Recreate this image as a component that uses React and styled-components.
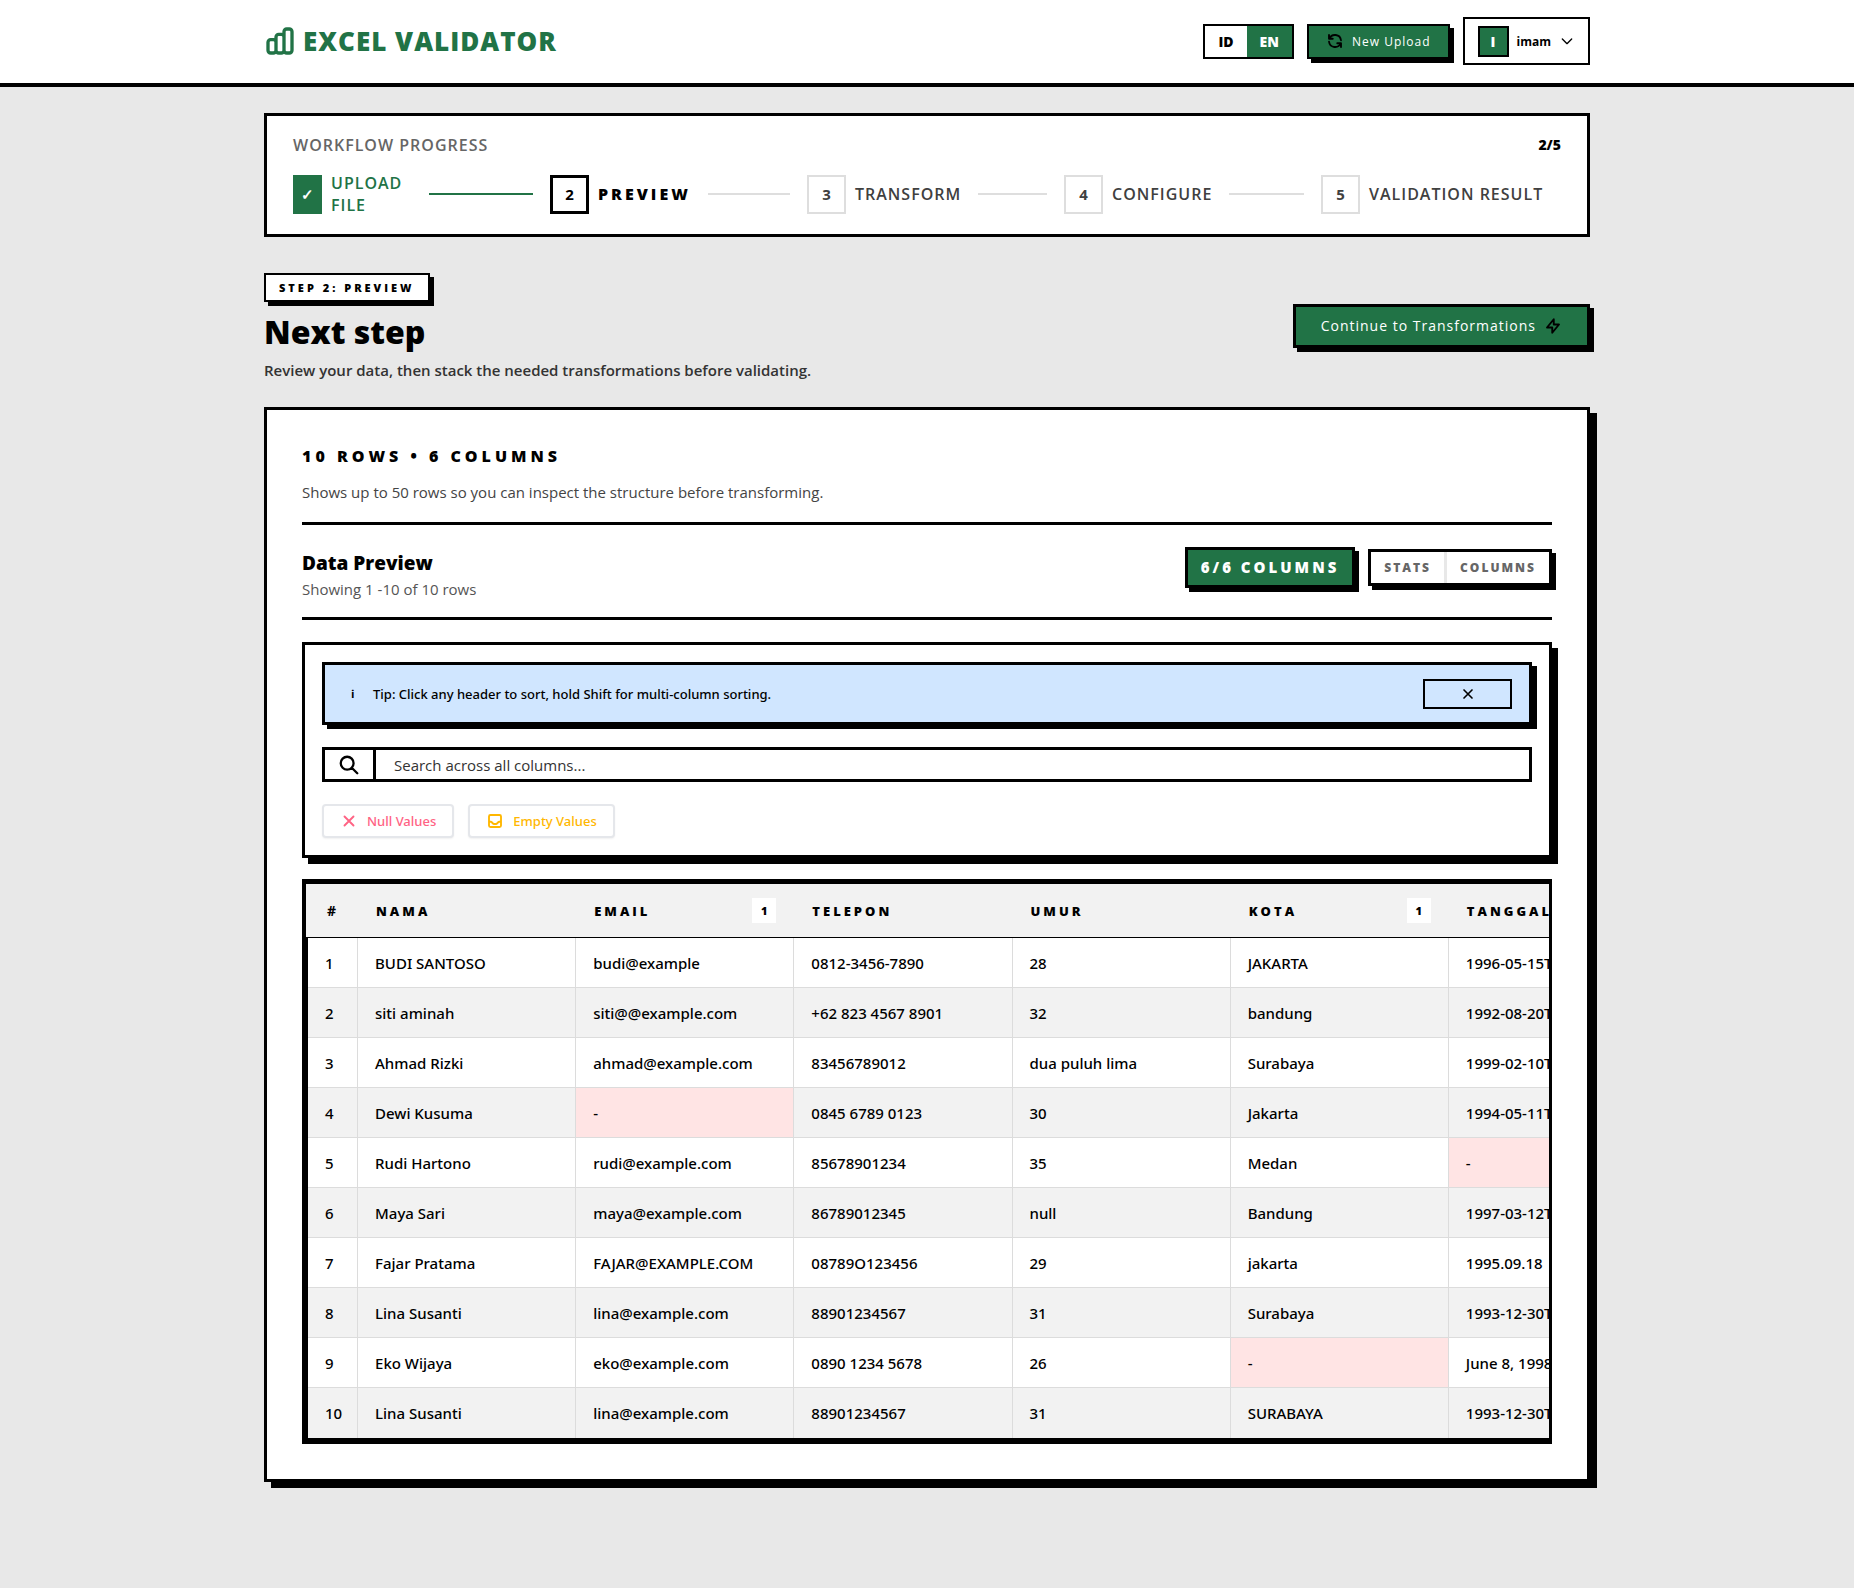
import React, { useState } from 'react';
import styled, { createGlobalStyle } from 'styled-components';
import {
  HiOutlineChartBar,
  HiOutlineRefresh,
  HiOutlineChevronDown,
  HiOutlineLightningBolt,
  HiOutlineSearch,
  HiOutlineX,
  HiOutlineInbox,
} from 'react-icons/hi';

const steps = ['Upload File', 'Preview', 'Transform', 'Configure', 'Validation Result'];
const currentStep = 2;

const columns = [
  { name: 'Nama' },
  { name: 'Email', nulls: 1 },
  { name: 'Telepon' },
  { name: 'Umur' },
  { name: 'Kota', nulls: 1 },
  { name: 'Tanggal' },
];

const rows = [
  ['BUDI SANTOSO', 'budi@example', '0812-3456-7890', '28', 'JAKARTA', '1996-05-15T'],
  ['siti aminah', 'siti@@example.com', '+62 823 4567 8901', '32', 'bandung', '1992-08-20T'],
  ['Ahmad Rizki', 'ahmad@example.com', '83456789012', 'dua puluh lima', 'Surabaya', '1999-02-10T'],
  ['Dewi Kusuma', null, '0845 6789 0123', '30', 'Jakarta', '1994-05-11T'],
  ['Rudi Hartono', 'rudi@example.com', '85678901234', '35', 'Medan', null],
  ['Maya Sari', 'maya@example.com', '86789012345', 'null', 'Bandung', '1997-03-12T'],
  ['Fajar Pratama', 'FAJAR@EXAMPLE.COM', '08789O123456', '29', 'jakarta', '1995.09.18'],
  ['Lina Susanti', 'lina@example.com', '88901234567', '31', 'Surabaya', '1993-12-30T'],
  ['Eko Wijaya', 'eko@example.com', '0890 1234 5678', '26', null, 'June 8, 1998'],
  ['Lina Susanti', 'lina@example.com', '88901234567', '31', 'SURABAYA', '1993-12-30T'],
];

const App = () => {
  const [query, setQuery] = useState('');

  return (
    <>
      <GlobalStyle />
      <TopBar>
        <TopBarInner>
          <Brand href="#">
            <HiOutlineChartBar size={32} />
            Excel Validator
          </Brand>
          <TopActions>
            <LangSwitch>
              <LangButton type="button">ID</LangButton>
              <LangButton type="button" $active>EN</LangButton>
            </LangSwitch>
            <UploadButton type="button">
              <HiOutlineRefresh size={18} />
              <span>New Upload</span>
            </UploadButton>
            <UserButton type="button">
              <Avatar>I</Avatar>
              imam
              <HiOutlineChevronDown size={16} />
            </UserButton>
          </TopActions>
        </TopBarInner>
      </TopBar>

      <Page>
        <Progress>
          <ProgressHead>
            <ProgressTitle>Workflow Progress</ProgressTitle>
            <ProgressCount>{currentStep}/{steps.length}</ProgressCount>
          </ProgressHead>
          <StepList>
            {steps.map((label, i) => {
              const n = i + 1;
              const state = n < currentStep ? 'done' : n === currentStep ? 'current' : 'todo';
              return (
                <Step key={label}>
                  <StepBox $state={state}>{state === 'done' ? '✓' : n}</StepBox>
                  <StepLabel $state={state}>{label}</StepLabel>
                  {n < steps.length && <StepLine $state={state} />}
                </Step>
              );
            })}
          </StepList>
        </Progress>

        <PageHead>
          <div>
            <StepBadge>Step 2: Preview</StepBadge>
            <PageTitle>Next step</PageTitle>
            <PageText>Review your data, then stack the needed transformations before validating.</PageText>
          </div>
          <ContinueButton type="button">
            <span>Continue to Transformations</span>
            <HiOutlineLightningBolt size={18} />
          </ContinueButton>
        </PageHead>

        <Card>
          <CardHead>
            <Summary>10 rows • 6 columns</Summary>
            <CardText>Shows up to 50 rows so you can inspect the structure before transforming.</CardText>
          </CardHead>

          <PreviewHead>
            <PreviewTitles>
              <PreviewTitle>Data Preview</PreviewTitle>
              <PreviewText>Showing 1 -10 of 10 rows</PreviewText>
            </PreviewTitles>
            <PreviewActions>
              <ColumnCount>6/6 columns</ColumnCount>
              <Segments>
                <SegmentButton type="button">Stats</SegmentButton>
                <SegmentButton type="button">Columns</SegmentButton>
              </Segments>
            </PreviewActions>
          </PreviewHead>

          <Filters>
            <Tip>
              <TipIcon>ℹ</TipIcon>
              <TipText>Tip: Click any header to sort, hold Shift for multi-column sorting.</TipText>
              <DismissButton type="button" aria-label="Dismiss tip">
                <HiOutlineX size={16} />
              </DismissButton>
            </Tip>
            <SearchBox>
              <SearchLabel htmlFor="search" aria-label="Search">
                <HiOutlineSearch size={22} />
              </SearchLabel>
              <SearchInput
                id="search"
                type="text"
                placeholder="Search across all columns..."
                value={query}
                onChange={(e) => setQuery(e.target.value)}
              />
            </SearchBox>
            <FilterRow>
              <FilterButton type="button" $color="#ff6384">
                <HiOutlineX size={18} />
                Null Values
              </FilterButton>
              <FilterButton type="button" $color="#ffb700">
                <HiOutlineInbox size={18} />
                Empty Values
              </FilterButton>
            </FilterRow>
          </Filters>

          <TableWrap>
            <Table>
              <colgroup>
                <IndexCol />
                {columns.map((c) => <DataCol key={c.name} />)}
              </colgroup>
              <thead>
                <tr>
                  <HeadCell scope="col"><HeadInner>#</HeadInner></HeadCell>
                  {columns.map((c) => (
                    <HeadCell key={c.name} scope="col">
                      <HeadInner>
                        <SortButton type="button">{c.name}</SortButton>
                        {c.nulls && <NullCount>{c.nulls}</NullCount>}
                      </HeadInner>
                    </HeadCell>
                  ))}
                </tr>
              </thead>
              <tbody>
                {rows.map((row, i) => (
                  <Row key={i}>
                    <Cell>{i + 1}</Cell>
                    {row.map((value, j) => (
                      <Cell key={j} $empty={value === null}>{value ?? '-'}</Cell>
                    ))}
                  </Row>
                ))}
              </tbody>
            </Table>
          </TableWrap>
        </Card>
      </Page>
    </>
  );
};

const green = '#217346';
const mediumFont = "'Noto Sans', 'Open Sans', sans-serif";

const GlobalStyle = createGlobalStyle`
  *, *::before, *::after {
    box-sizing: border-box;
  }

  body {
    margin: 0;
    background: #e8e8e8;
    color: #000;
    font-family: 'Open Sans', 'Noto Sans', sans-serif;
    font-size: 15px;
    line-height: 24px;
  }

  button, input {
    font-family: inherit;
    color: inherit;
  }

  button {
    cursor: pointer;
  }

  h1, h2, h3, p {
    margin: 0;
  }

  svg {
    flex: none;
  }

  svg path {
    stroke-width: 2.5;
  }
`;

const TopBar = styled.header`
  padding: 17px 32px 18px;
  background: #fff;
  border-bottom: 4px solid #000;
`;

const TopBarInner = styled.div`
  display: flex;
  align-items: center;
  justify-content: space-between;
  max-width: 1326px;
  margin: 0 auto;
`;

const Brand = styled.a`
  display: flex;
  align-items: center;
  gap: 7px;
  color: ${green};
  font-size: 26px;
  font-weight: 800;
  letter-spacing: 1px;
  text-transform: uppercase;
  text-decoration: none;
`;

const TopActions = styled.div`
  display: flex;
  align-items: center;
  gap: 13px;
`;

const LangSwitch = styled.div`
  display: flex;
  height: 35px;
  border: 2px solid #000;
`;

const LangButton = styled.button`
  padding: 0 13px;
  border: 0;
  background: ${(p) => (p.$active ? green : '#fff')};
  color: ${(p) => (p.$active ? '#fff' : '#000')};
  font-size: 14px;
  font-weight: 800;
`;

const UploadButton = styled.button`
  display: flex;
  align-items: center;
  gap: 8px;
  height: 35px;
  padding: 0 17px;
  border: 2px solid #000;
  background: ${green};
  box-shadow: 4px 4px 0 #000;
  font-size: 12px;
  letter-spacing: 1px;

  span {
    color: #fff;
  }
`;

const UserButton = styled.button`
  display: flex;
  align-items: center;
  gap: 8px;
  height: 48px;
  padding: 0 13px;
  border: 2px solid #000;
  background: #fff;
  font-size: 12px;
  font-weight: 700;

  svg path {
    stroke-width: 2;
  }
`;

const Avatar = styled.span`
  display: flex;
  align-items: center;
  justify-content: center;
  width: 31px;
  height: 31px;
  border: 2px solid #000;
  background: ${green};
  color: #fff;
  font-size: 14px;
  font-weight: 800;
`;

const Page = styled.main`
  max-width: 1326px;
  margin: 0 auto;
  padding: 26px 0 96px;
`;

const Progress = styled.section`
  padding: 17px 26px 18px;
  border: 3px solid #000;
  background: #fff;
`;

const ProgressHead = styled.div`
  display: flex;
  justify-content: space-between;
  margin-bottom: 15px;
`;

const ProgressTitle = styled.h2`
  color: #666;
  font-size: 16px;
  font-weight: 600;
  letter-spacing: 1px;
  line-height: 24px;
  text-transform: uppercase;
`;

const ProgressCount = styled.span`
  font-size: 14px;
  font-weight: 800;
`;

const StepList = styled.ol`
  display: grid;
  grid-template-columns: repeat(5, 1fr);
  gap: 17px;
  margin: 0;
  padding: 0;
  list-style: none;
`;

const Step = styled.li`
  display: flex;
  align-items: center;
  min-width: 0;
`;

const StepBox = styled.span`
  display: flex;
  flex: none;
  align-items: center;
  justify-content: center;
  width: ${(p) => (p.$state === 'done' ? '29px' : '39px')};
  height: 39px;
  border: ${(p) => ({ done: `2px solid ${green}`, current: '3px solid #000', todo: '2px solid #dedede' })[p.$state]};
  background: ${(p) => (p.$state === 'done' ? green : '#fff')};
  color: ${(p) => ({ done: '#fff', current: '#000', todo: '#404040' })[p.$state]};
  font-size: 15px;
  font-weight: 700;
`;

const StepLabel = styled.span`
  width: ${(p) => (p.$state === 'done' ? '81px' : 'auto')};
  margin-left: 9px;
  color: ${(p) => ({ done: green, current: '#000', todo: '#404040' })[p.$state]};
  font-size: 16px;
  font-weight: ${(p) => (p.$state === 'current' ? 900 : 600)};
  letter-spacing: ${(p) => (p.$state === 'current' ? '3px' : '1px')};
  line-height: 22px;
  text-transform: uppercase;
`;

const StepLine = styled.span`
  flex: 1;
  height: 2px;
  margin-left: 17px;
  background: ${(p) => (p.$state === 'done' ? green : '#dedede')};
`;

const PageHead = styled.div`
  display: flex;
  align-items: center;
  justify-content: space-between;
  margin: 36px 0 25px;
`;

const StepBadge = styled.span`
  display: inline-block;
  padding: 0 13px;
  border: 2px solid #000;
  background: #fff;
  box-shadow: 4px 4px 0 #000;
  font-size: 11px;
  font-weight: 900;
  letter-spacing: 3px;
  line-height: 25px;
  text-transform: uppercase;
  vertical-align: top;
`;

const PageTitle = styled.h1`
  margin: 8px 0 4px;
  font-size: 32px;
  font-weight: 900;
  line-height: 44px;
`;

const PageText = styled.p`
  color: #333;
  font-weight: 600;
`;

const ContinueButton = styled.button`
  display: flex;
  align-items: center;
  gap: 8px;
  height: 44px;
  margin-bottom: 4px;
  padding: 0 25px;
  border: 3px solid #000;
  background: ${green};
  box-shadow: 4px 4px 0 #000;
  font-size: 14px;
  letter-spacing: 1px;

  span {
    color: #fff;
  }
`;

const Card = styled.section`
  padding: 34px 35px 35px;
  border: 3px solid #000;
  background: #fff;
  box-shadow: 7px 6px 0 #000;
`;

const CardHead = styled.div`
  padding-bottom: 18px;
  border-bottom: 3px solid #000;
`;

const Summary = styled.h2`
  margin-bottom: 12px;
  font-size: 16px;
  font-weight: 900;
  letter-spacing: 4px;
  line-height: 24px;
  text-transform: uppercase;
`;

const CardText = styled.p`
  color: #444;
`;

const PreviewHead = styled.div`
  display: flex;
  align-items: flex-start;
  justify-content: space-between;
  padding: 22px 0 16px;
  border-bottom: 3px solid #000;
`;

const PreviewTitles = styled.div`
  padding-top: 2px;
`;

const PreviewTitle = styled.h3`
  font-size: 19px;
  font-weight: 800;
  line-height: 28px;
`;

const PreviewText = styled.p`
  color: #555;
`;

const PreviewActions = styled.div`
  display: flex;
  align-items: center;
  gap: 13px;
`;

const ColumnCount = styled.span`
  padding: 0 13px;
  border: 3px solid #000;
  background: ${green};
  box-shadow: 4px 4px 0 #000;
  color: #fff;
  font-weight: 900;
  letter-spacing: 3px;
  line-height: 35px;
  text-transform: uppercase;
`;

const Segments = styled.div`
  display: flex;
  height: 37px;
  border: 3px solid #000;
  background: #fff;
  box-shadow: 4px 4px 0 #000;
`;

const SegmentButton = styled.button`
  padding: 0 13px;
  border: 0;
  background: #fff;
  color: #666;
  font-size: 12px;
  font-weight: 900;
  letter-spacing: 2px;
  text-transform: uppercase;

  & + & {
    border-left: 3px solid #e8e8e8;
  }
`;

const Filters = styled.div`
  display: flex;
  flex-direction: column;
  gap: 22px;
  margin: 22px 0 21px;
  padding: 17px;
  border: 3px solid #000;
  background: #fff;
  box-shadow: 6px 6px 0 #000;
`;

const Tip = styled.div`
  display: flex;
  align-items: center;
  height: 63px;
  padding: 0 17px 0 26px;
  border: 3px solid #000;
  background: #d0e6ff;
  box-shadow: 5px 4px 0 #000;
`;

const TipIcon = styled.span`
  width: 22px;
  font-size: 11px;
  font-weight: 700;
`;

const TipText = styled.p`
  flex: 1;
  font-family: ${mediumFont};
  font-size: 13px;
  font-weight: 500;
`;

const DismissButton = styled.button`
  display: flex;
  align-items: center;
  justify-content: center;
  width: 89px;
  height: 30px;
  padding: 0;
  border: 2px solid #000;
  background: transparent;
`;

const SearchBox = styled.div`
  display: flex;
  height: 35px;
  border: 3px solid #000;
`;

const SearchLabel = styled.label`
  display: flex;
  align-items: center;
  justify-content: center;
  width: 51px;
  border-right: 3px solid #000;
`;

const SearchInput = styled.input`
  flex: 1;
  min-width: 0;
  padding: 0 18px;
  border: 0;
  outline: 0;
  background: #fff;
  font-size: 15px;

  &::placeholder {
    color: #333;
    opacity: 1;
  }
`;

const FilterRow = styled.div`
  display: flex;
  gap: 14px;
`;

const FilterButton = styled.button`
  display: flex;
  align-items: center;
  gap: 9px;
  height: 34px;
  padding: 0 16px;
  border: 2px solid #e5e7eb;
  border-radius: 4px;
  background: #fff;
  box-shadow: 0 1px 2px rgba(0, 0, 0, 0.06);
  color: ${(p) => p.$color};
  font-family: ${mediumFont};
  font-size: 13px;
  font-weight: 500;
`;

const TableWrap = styled.div`
  overflow-x: auto;
  border: 3px solid #000;
  scrollbar-width: none;
`;

const Table = styled.table`
  width: 100%;
  min-width: 1362px;
  border-top: 2px solid #000;
  border-bottom: 3px solid #000;
  border-spacing: 0;
  table-layout: fixed;
`;

const IndexCol = styled.col`
  width: 53px;
`;

const DataCol = styled.col`
  width: 218px;
`;

const HeadCell = styled.th`
  height: 54px;
  padding: 0 18px;
  border-bottom: 1px solid #000;
  background: #f2f2f2;
  font-size: 14px;
  font-weight: 700;
  text-align: left;

  &:first-child {
    border-left: 1px solid #000;
    padding-left: 21px;
    padding-right: 0;
  }
`;

const HeadInner = styled.div`
  display: flex;
  align-items: center;
  justify-content: space-between;
`;

const SortButton = styled.button`
  padding: 0;
  border: 0;
  background: none;
  font-size: 13px;
  font-weight: 900;
  letter-spacing: 3px;
  text-transform: uppercase;
`;

const NullCount = styled.span`
  width: 24px;
  background: #fff;
  font-size: 11px;
  font-weight: 800;
  line-height: 25px;
  text-align: center;
`;

const Row = styled.tr`
  background: #fff;

  &:nth-child(even) {
    background: #f2f2f2;
  }
`;

const Cell = styled.td`
  height: 50px;
  padding: 0 17px;
  border-right: 1px solid #dcdcdc;
  background: ${(p) => (p.$empty ? '#ffe4e4' : 'transparent')};
  box-shadow: inset 0 -1px 0 #dcdcdc;
  font-family: ${mediumFont};
  font-weight: 500;
  white-space: nowrap;

  &:first-child {
    border-left: 3px solid #000;
    padding-right: 0;
  }

  tr:last-child > & {
    box-shadow: none;
  }
`;

export default App;
